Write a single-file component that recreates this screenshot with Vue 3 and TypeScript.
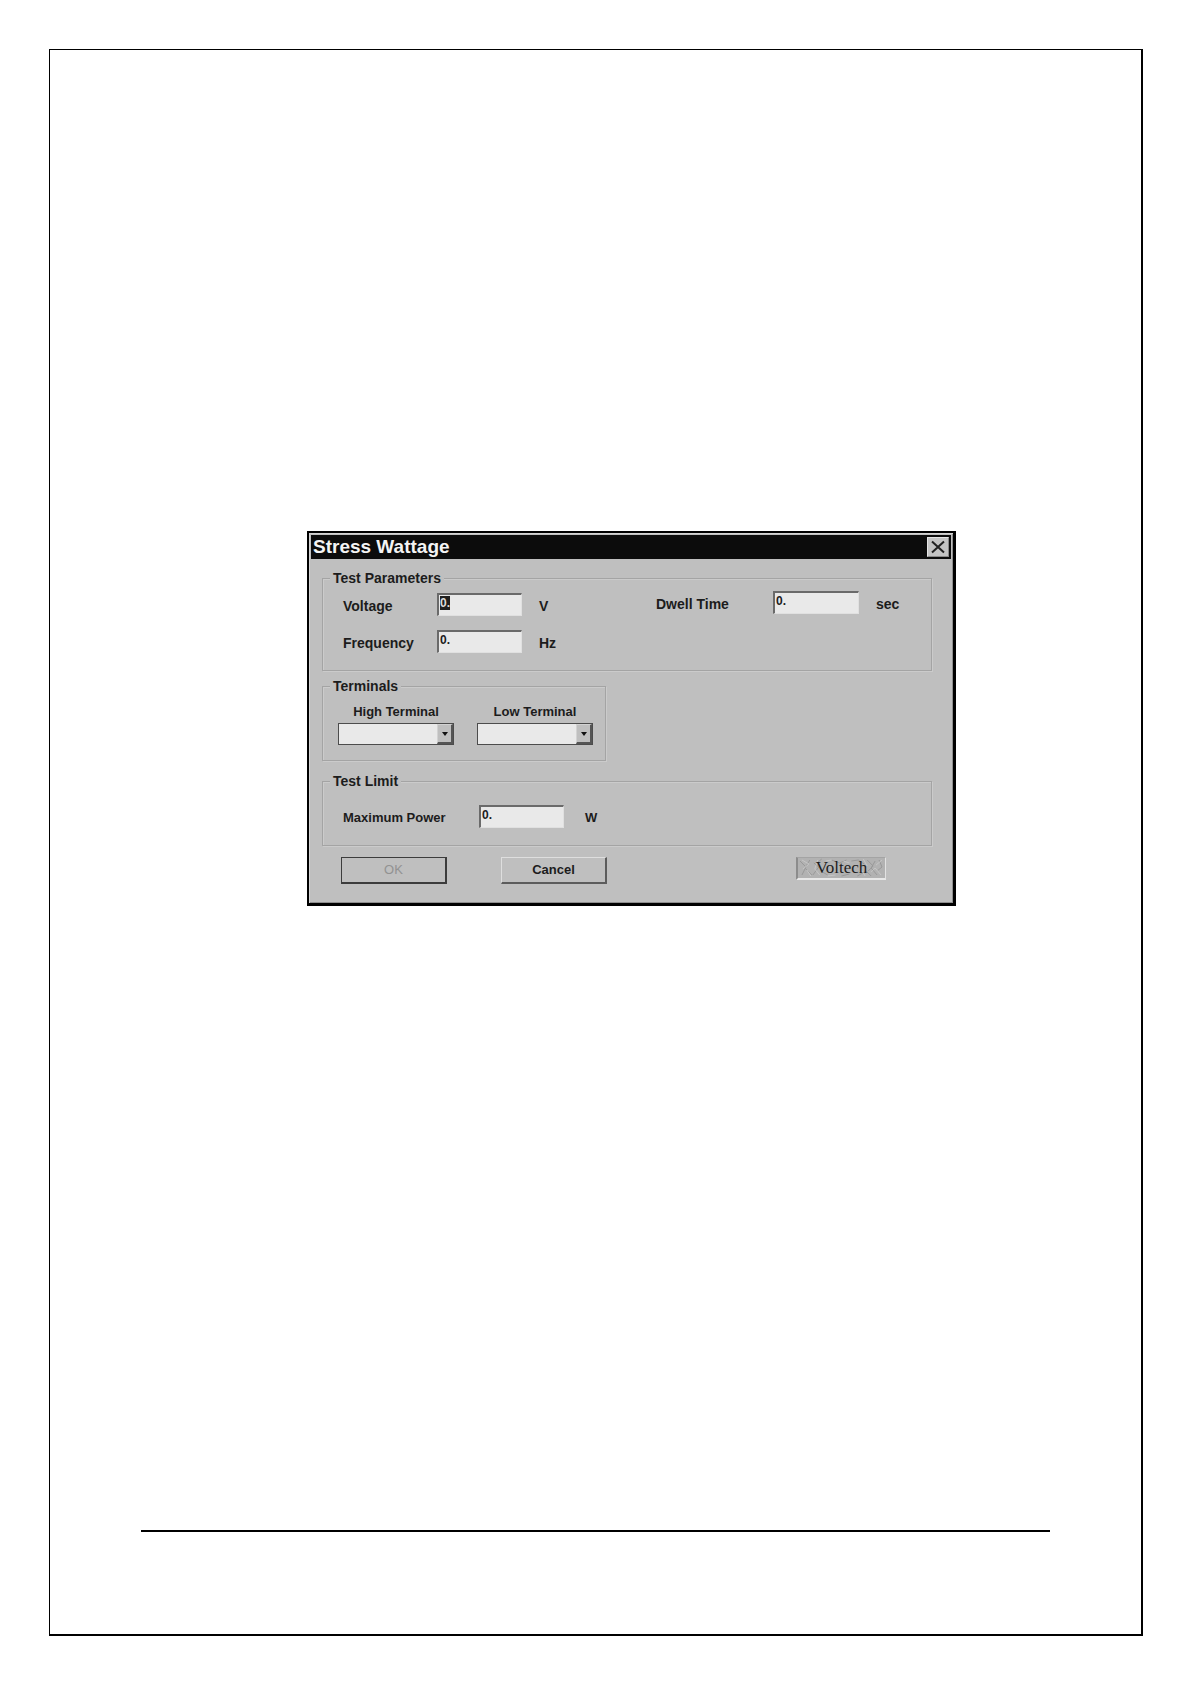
<script setup lang="ts">
import { onMounted, ref } from 'vue'

const voltage = ref('0.')
const frequency = ref('0.')
const dwellTime = ref('0.')
const maximumPower = ref('0.')
const highTerminal = ref('')
const lowTerminal = ref('')
const voltageInput = ref<HTMLInputElement | null>(null)

// The first field opens focused, with its value selected
onMounted(() => {
  voltageInput.value?.focus()
  voltageInput.value?.select()
})
</script>

<template>
  <main class="sheet">
    <section class="dialog" role="dialog" aria-labelledby="dialog-title">
      <header class="title-bar">
        <h1 id="dialog-title">Stress Wattage</h1>
        <button class="close" type="button" aria-label="Close">
          <svg width="14" height="14" viewBox="0 0 14 14" aria-hidden="true">
            <path d="M1 1.5 L13 12.5 M13 1.5 L1 12.5" fill="none" stroke="#222" stroke-width="2" />
          </svg>
        </button>
      </header>

      <form class="body" @submit.prevent>
        <fieldset class="group parameters">
          <legend>Test Parameters</legend>
          <div class="columns">
            <div class="column main-column">
              <div class="field">
                <label for="voltage">Voltage</label>
                <input id="voltage" ref="voltageInput" v-model="voltage" type="text" />
                <span class="unit">V</span>
              </div>
              <div class="field">
                <label for="frequency">Frequency</label>
                <input id="frequency" v-model="frequency" type="text" />
                <span class="unit">Hz</span>
              </div>
            </div>
            <div class="column">
              <div class="field dwell">
                <label for="dwell">Dwell Time</label>
                <input id="dwell" v-model="dwellTime" type="text" />
                <span class="unit">sec</span>
              </div>
            </div>
          </div>
        </fieldset>

        <fieldset class="group terminals">
          <legend>Terminals</legend>
          <div class="terminal-row">
            <div class="terminal">
              <label for="high">High Terminal</label>
              <div class="combo">
                <select id="high" v-model="highTerminal"><option value=""></option></select>
                <span class="arrow" aria-hidden="true"><svg width="6" height="4" viewBox="0 0 6 4"><path d="M0 0H6L3 4Z" fill="#111" /></svg></span>
              </div>
            </div>
            <div class="terminal">
              <label for="low">Low Terminal</label>
              <div class="combo">
                <select id="low" v-model="lowTerminal"><option value=""></option></select>
                <span class="arrow" aria-hidden="true"><svg width="6" height="4" viewBox="0 0 6 4"><path d="M0 0H6L3 4Z" fill="#111" /></svg></span>
              </div>
            </div>
          </div>
        </fieldset>

        <fieldset class="group limit">
          <legend>Test Limit</legend>
          <div class="field power">
            <label for="power">Maximum Power</label>
            <input id="power" v-model="maximumPower" type="text" />
            <span class="unit">W</span>
          </div>
        </fieldset>

        <footer class="actions">
          <button class="push ok" type="submit" disabled>OK</button>
          <button class="push" type="button">Cancel</button>
          <div class="brand">
            <svg class="marble" viewBox="0 0 88 20" preserveAspectRatio="none" aria-hidden="true">
              <rect width="88" height="20" fill="#b2b2b2" />
              <g fill="none" stroke="#989898">
                <path d="M2 3l6 6-4 8M12 2l-5 8 7 7M16 5l5 4-6 8M24 1l-6 5M30 17l-7-4M34 2l8 3 7-3M54 3l7-1 6 4M60 18l9-5 5 5M70 2l6 6-5 5M78 3l-4 7 6 7M82 2l3 7-5 4M44 18l8-2" />
              </g>
              <g fill="none" stroke="#c6c6c6">
                <path d="M4 2l7 4-6 5M9 12l4 6M20 2l-3 9 5 6M28 3l6-1M38 17l-8 1M46 3l6 2M66 1l4 7M64 12l4 6M74 14l4-4 6 7M79 7l6-5" />
              </g>
            </svg>
            <span>Voltech</span>
          </div>
        </footer>
      </form>
    </section>
    <hr class="rule" />
  </main>
</template>

<style>
body {
  margin: 0;
  background: #fff;
}
</style>

<style scoped>
.sheet {
  box-sizing: border-box;
  display: flex;
  flex-direction: column;
  min-height: calc(100vh - 97px);
  margin: 49px 48px 48px 49px;
  padding: 481px 91px 102px;
  border: solid #000;
  border-width: 1px 2px 2px 1px;
}

.dialog {
  margin: 0 94px 48px 166px;
  border: solid #000;
  border-width: 2px 3px 3px 2px;
  background: #bfbfbf;
  box-shadow: inset 1px 1px #d4d4d4, inset -1px -1px #8e8e8e;
  color: #1c1c1c;
  font: bold 13px/16px "Liberation Sans", Arial, sans-serif;
}

.title-bar {
  display: flex;
  align-items: center;
  justify-content: space-between;
  height: 24px;
  margin: 2px 2px 0;
  padding-right: 2px;
  background: #0c0c0c;
}

h1 {
  margin: 0 2px;
  color: #f4f4f4;
  font-size: 19px;
  line-height: 24px;
}

.close {
  display: flex;
  align-items: center;
  justify-content: center;
  width: 22px;
  height: 20px;
  padding: 0;
  border: 1px solid;
  border-color: #e4e4e4 #8a8a8a #8a8a8a #e4e4e4;
  background: #c4c4c4;
}

.body {
  padding: 11px 21px 19px 13px;
}

.group {
  min-width: 0;
  margin: 0;
  padding: 0 0 0 20px;
  border: 1px solid #a4a4a4;
  box-shadow: inset 1px 1px #cbcbcb, 1px 1px #cbcbcb;
}

legend {
  margin-left: -13px;
  padding: 0 3px;
  background: #bfbfbf;
  font-size: 14px;
}

.parameters {
  margin-bottom: 7px;
  padding-bottom: 17px;
  font-size: 14px;
}

.columns {
  display: grid;
  grid-template-columns: 313px 1fr;
  padding-top: 5px;
}

.column {
  display: flex;
  flex-direction: column;
  gap: 14px;
}

.main-column {
  padding-top: 2px;
}

.field {
  display: grid;
  grid-template-columns: 94px 85px 1fr;
  align-items: end;
}

.dwell {
  grid-template-columns: 117px 86px 1fr;
}

.power {
  grid-template-columns: 136px 85px 1fr;
}

.field label,
.unit {
  padding-bottom: 2px;
}

.unit {
  padding-left: 17px;
}

.power .unit {
  padding-left: 21px;
}

input {
  box-sizing: border-box;
  width: 100%;
  height: 23px;
  padding: 0 1px 5px;
  border: solid;
  border-width: 2px 1px 1px 2px;
  border-color: #6a6a6a #e0e0e0 #e0e0e0 #6a6a6a;
  border-radius: 0;
  outline: none;
  background: #e9e9e9;
  color: #1c1c1c;
  caret-color: transparent;
  font: bold 12px/15px "Liberation Sans", Arial, sans-serif;
}

input::selection {
  background: #202020;
  color: #dcdcdc;
}

.terminals {
  width: 284px;
  box-sizing: border-box;
  margin-bottom: 12px;
  padding: 10px 0 15px 15px;
}

.terminals legend {
  margin-left: -8px;
}

.terminal-row {
  display: flex;
  gap: 23px;
}

.terminal {
  display: flex;
  flex-direction: column;
  align-items: center;
  gap: 3px;
}

.combo {
  display: grid;
  width: 116px;
  height: 22px;
}

.combo select,
.arrow {
  grid-area: 1 / 1;
}

.combo select {
  width: 100%;
  height: 100%;
  margin: 0;
  border: 1px solid #4c4c4c;
  border-radius: 0;
  appearance: none;
  background: #e9e9e9;
}

.arrow {
  display: flex;
  align-items: center;
  justify-content: center;
  justify-self: end;
  box-sizing: border-box;
  width: 16px;
  margin: 1px;
  border: solid;
  border-width: 1px 2px 2px 1px;
  border-color: #d2d2d2 #555 #555 #d2d2d2;
  background: #bfbfbf;
  pointer-events: none;
}

.limit {
  padding-top: 16px;
  padding-bottom: 17px;
}

.actions {
  display: flex;
  align-items: flex-start;
  gap: 54px;
  padding: 11px 46px 0 19px;
}

.push {
  width: 106px;
  height: 27px;
  padding: 0;
  border: solid;
  border-width: 1px 2px 2px 1px;
  border-color: #dedede #5c5c5c #5c5c5c #dedede;
  background: #bfbfbf;
  color: #1c1c1c;
  font: inherit;
}

.ok {
  border-color: #3c3c3c;
  color: #929292;
  font-weight: normal;
}

.brand {
  display: grid;
  box-sizing: border-box;
  width: 90px;
  height: 23px;
  margin-left: auto;
  border: solid;
  border-width: 1px 1px 2px 2px;
  border-color: #a4a4a4 #e2e2e2 #e8e8e8 #8c8c8c;
  font: 17px/20px "Liberation Serif", "Times New Roman", serif;
  text-align: center;
}

.brand > * {
  grid-area: 1 / 1;
}

.marble {
  width: 100%;
  height: 20px;
}

.rule {
  width: 100%;
  height: 2px;
  margin: auto 0 0;
  border: 0;
  background: #000;
}
</style>
